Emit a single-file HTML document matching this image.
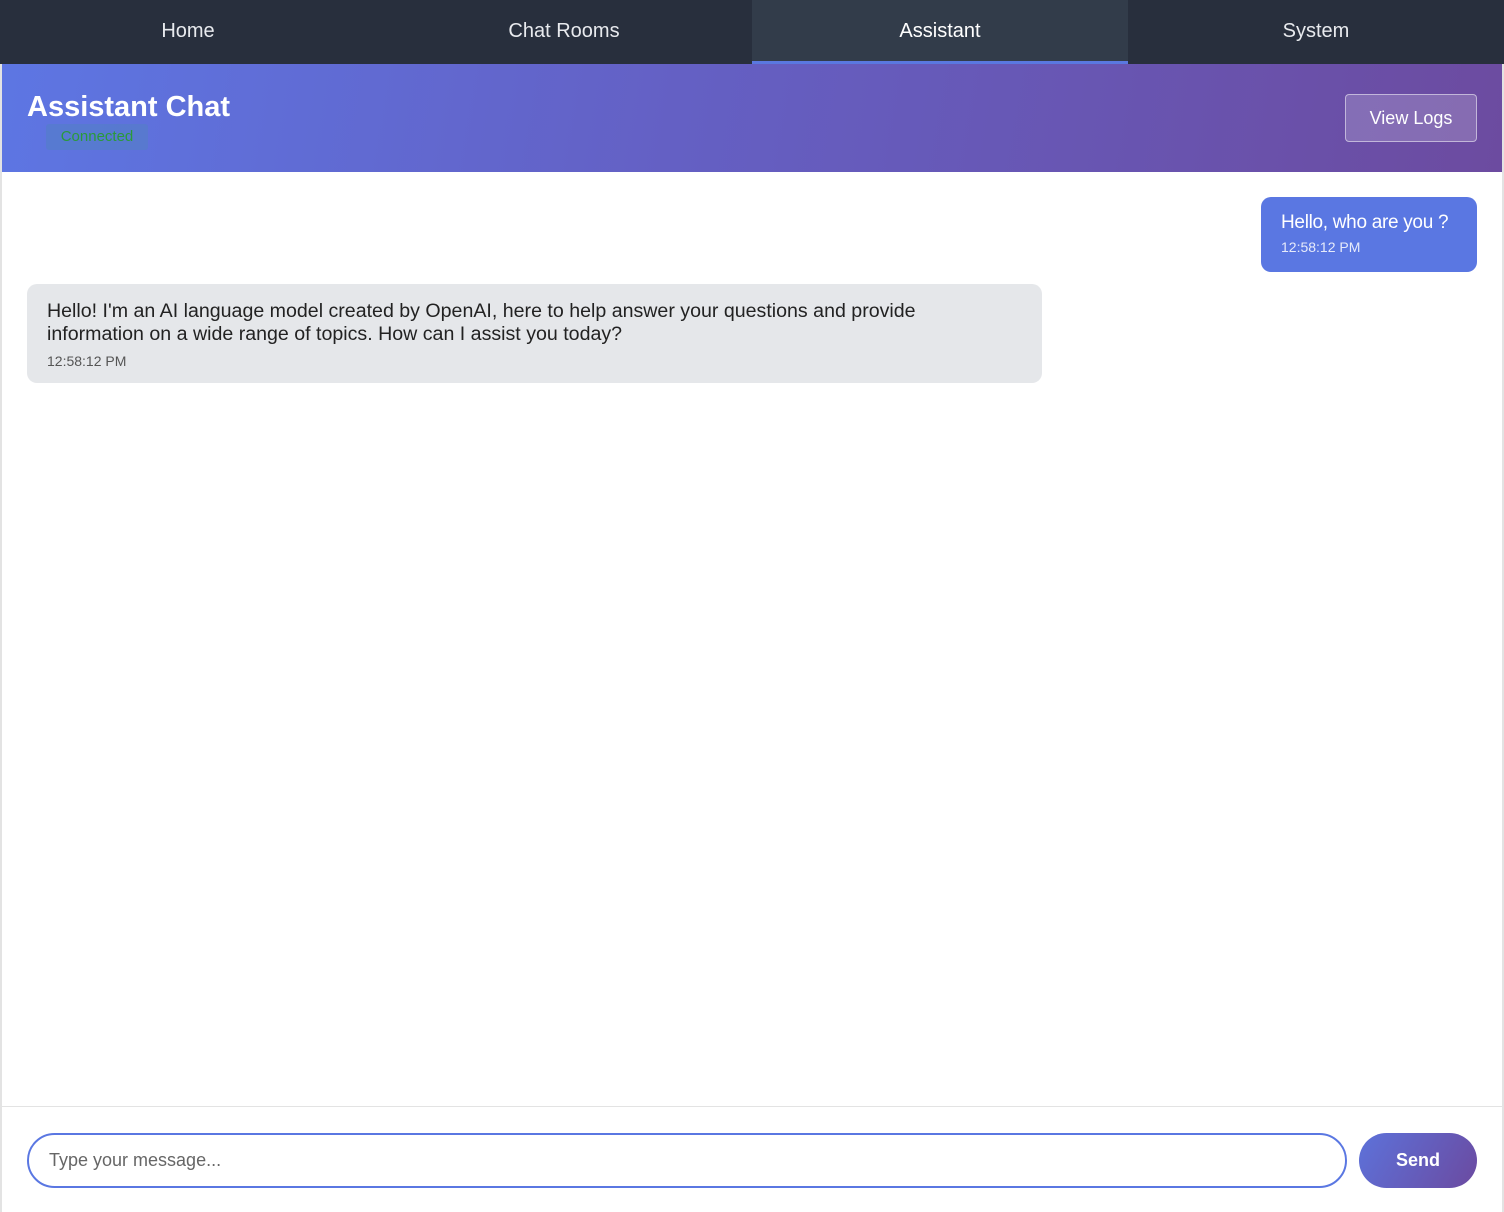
<!DOCTYPE html>
<html><head><style>
*{box-sizing:border-box;margin:0;padding:0}
body{width:1504px;height:1212px;overflow:hidden;font-family:"Liberation Sans",sans-serif;background:#fff;position:relative}
nav{height:64px;background:#282f3d;display:flex}
nav div{flex:1;color:#e8eaee;font-size:20px;text-align:center;line-height:62px}
nav div.a{background:#323c4a;color:#fff;border-bottom:3px solid #5a78e0}
.wrap{position:absolute;left:0;top:64px;width:1504px;height:1148px;border-left:2px solid #e3e3e3;border-right:2px solid #e3e3e3}
.hdr{height:108px;background:linear-gradient(100deg,#5d76e3 0%,#6460c4 45%,#6c4ba0 100%);position:relative}
.hdr h1{position:absolute;left:25px;top:27px;color:#fff;font-size:29px;font-weight:bold}
.badge{position:absolute;left:44px;top:60px;width:102px;height:26px;background:rgba(80,130,190,.45);color:#2a9a3a;font-size:15px;text-align:center;line-height:26px;border-radius:3px}
.logs{position:absolute;right:25px;top:30px;width:132px;height:48px;border:1px solid rgba(255,255,255,.5);background:rgba(255,255,255,.18);color:#fff;font-size:18px;text-align:center;line-height:46px;border-radius:4px}
.u{position:absolute;right:25px;top:133px;width:216px;height:75px;background:#5a77e2;border-radius:10px;color:#fff;padding:15px 20px;white-space:nowrap}
.u p{font-size:19px;letter-spacing:-0.3px}.u s,.b s{text-decoration:none;display:block;font-size:14px;margin-top:5px;opacity:.85}
.b{position:absolute;left:25px;top:220px;width:1015px;height:99px;background:#e5e7ea;border-radius:10px;color:#222;padding:16px 20px;font-size:19.6px;line-height:23px;white-space:nowrap}
.b s{color:#555;opacity:1;margin-top:4px}
.foot{position:absolute;left:0;top:1042px;width:1500px;border-top:1px solid #e3e3e3;height:106px}
.inp{position:absolute;left:25px;top:26px;width:1320px;height:55px;border:2px solid #5a77e2;border-radius:28px;color:#666;font-size:18px;padding-left:20px;line-height:51px}
.send{position:absolute;left:1357px;top:26px;width:118px;height:55px;border-radius:28px;background:linear-gradient(120deg,#5d72da,#6b4aa0);color:#fff;font-weight:bold;font-size:18px;text-align:center;line-height:55px}
</style></head><body>
<nav><div>Home</div><div>Chat Rooms</div><div class="a">Assistant</div><div>System</div></nav>
<div class="wrap">
<div class="hdr"><h1>Assistant Chat</h1><div class="badge">Connected</div><div class="logs">View Logs</div></div>
<div class="u"><p>Hello, who are you ?</p><s>12:58:12 PM</s></div>
<div class="b">Hello! I'm an AI language model created by OpenAI, here to help answer your questions and provide<br>information on a wide range of topics. How can I assist you today?<s>12:58:12 PM</s></div>
<div class="foot"><div class="inp">Type your message...</div><div class="send">Send</div></div>
</div>
</body></html>
